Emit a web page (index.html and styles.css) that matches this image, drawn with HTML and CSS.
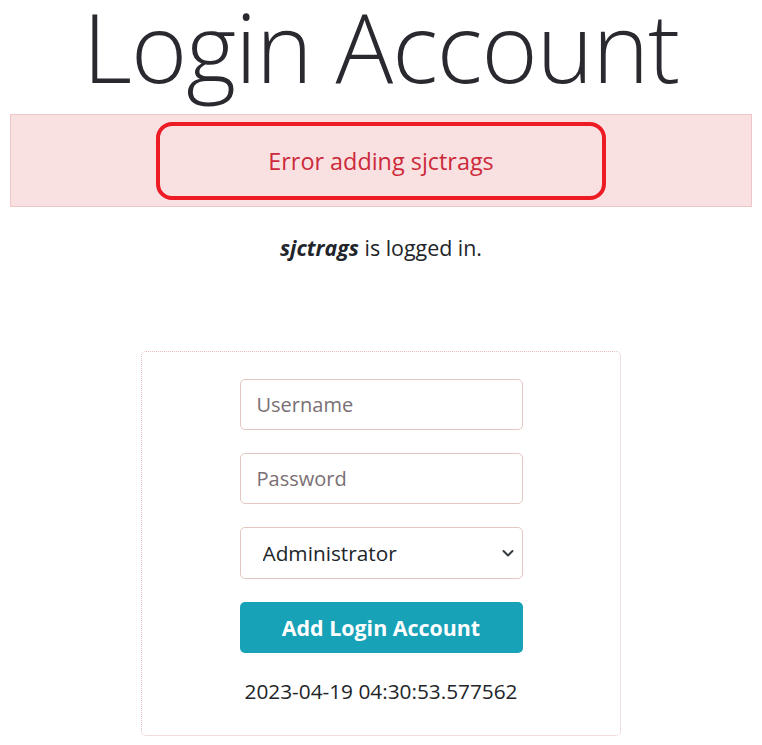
FILE: index.html
```html
<!DOCTYPE html>
<html lang="en">
<head>
<meta charset="utf-8">
<title>Login Account</title>
<link rel="stylesheet" href="styles.css">
</head>
<body>
<main class="page">
  <h1 class="title">Login Account</h1>
  <div class="alert">
    <div class="alert-mark">Error adding sjctrags</div>
  </div>
  <p class="status"><strong><em>sjctrags</em></strong> is logged in.</p>
  <form class="card">
    <input class="field" type="text" placeholder="Username">
    <input class="field" type="password" placeholder="Password">
    <div class="select-wrap">
      <select class="field select">
        <option>Administrator</option>
      </select>
      <svg class="chevron" width="14" height="10" viewBox="0 0 14 10"><path d="M2.5 3 L7 7.5 L11.5 3" fill="none" stroke="#343a40" stroke-width="2" stroke-linecap="round" stroke-linejoin="round"/></svg>
    </div>
    <button class="btn" type="button">Add Login Account</button>
    <p class="stamp">2023-04-19 04:30:53.577562</p>
  </form>
</main>
</body>
</html>
```

FILE: styles.css
```css
* { box-sizing: border-box; }
html, body { margin: 0; padding: 0; background: #fff; }
body {
  font-family: "Open Sans", "Noto Sans", sans-serif;
  color: #212529;
}
.page {
  display: flex;
  flex-direction: column;
  align-items: center;
  padding: 0 10px;
}
.title {
  margin: 0;
  padding-bottom: 22px;
  font-size: 96px;
  font-weight: 300;
  line-height: 92px;
  letter-spacing: -1px;
  color: #2a2930;
}
.alert {
  align-self: stretch;
  background: #f9e1e2;
  border: 1px solid #f0c6c8;
  padding: 7px 0 6px;
  display: flex;
  justify-content: center;
}
.alert-mark {
  width: 450px;
  height: 78px;
  border: 4px solid #ed1c24;
  border-radius: 16px;
  display: flex;
  align-items: center;
  justify-content: center;
  color: #cc2a3a;
  font-size: 23.4px;
}
.status {
  margin: 26px 0 0;
  font-size: 21.4px;
  line-height: 30px;
}
.status em { font-weight: 700; }
.card {
  margin-top: 88px;
  width: 480px;
  border: 1px dotted #e7bcbc;
  border-radius: 5px;
  padding: 27px 0 29px;
  display: flex;
  flex-direction: column;
  align-items: center;
  gap: 23px;
}
.field {
  width: 283px;
  height: 51px;
  border: 1px solid #e3c8c1;
  border-radius: 5px;
  padding: 0 16px;
  font-family: inherit;
  font-size: 20px;
  color: #212529;
  background: #fff;
  outline: none;
}
.field::placeholder { color: #7a6f74; }
.select-wrap { position: relative; }
.select {
  height: 52px;
  appearance: none;
  -webkit-appearance: none;
  padding-left: 22px;
  font-size: 20.8px;
}
.chevron {
  position: absolute;
  right: 8px;
  top: 21px;
}
.btn {
  width: 283px;
  height: 51px;
  border: none;
  border-radius: 5px;
  background: #18a2b8;
  color: #fff;
  font-family: inherit;
  font-size: 21.4px;
  font-weight: 700;
}
.stamp {
  margin: 0;
  font-size: 20.8px;
  line-height: 30px;
}
```
